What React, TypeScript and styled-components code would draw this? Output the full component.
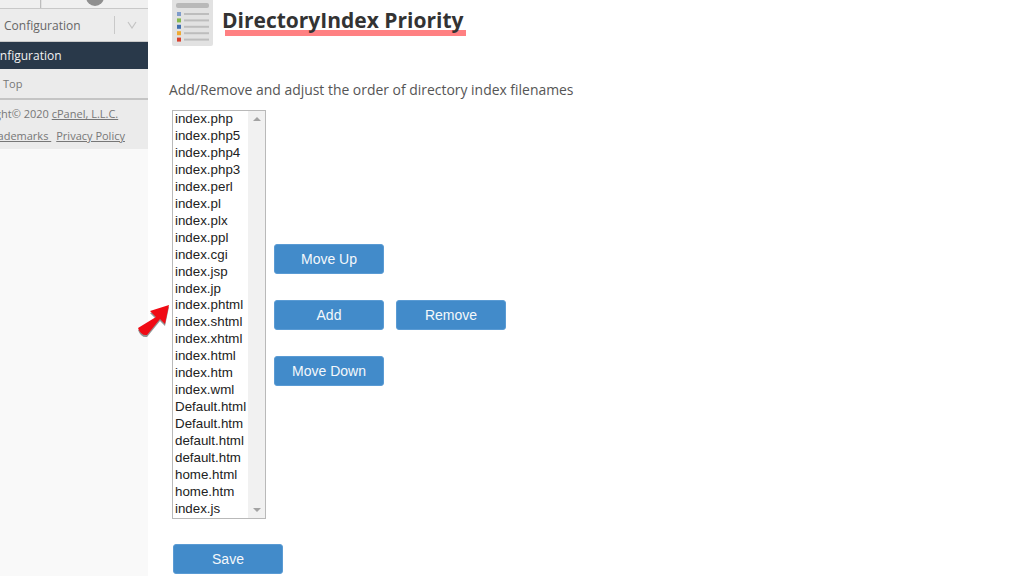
import * as React from 'react'
import styled, { createGlobalStyle } from 'styled-components'

const files = [
    'index.php', 'index.php5', 'index.php4', 'index.php3', 'index.perl', 'index.pl', 'index.plx', 'index.ppl',
    'index.cgi', 'index.jsp', 'index.jp', 'index.phtml', 'index.shtml', 'index.xhtml', 'index.html', 'index.htm',
    'index.wml', 'Default.html', 'Default.htm', 'default.html', 'default.htm', 'home.html', 'home.htm', 'index.js',
]

const DocIcon = () => (
    <svg width="41" height="50" viewBox="0 0 41 50">
        <rect width="41" height="50" rx="2" fill="#e2e2e2" />
        <rect x="4" y="7" width="33" height="5" rx="2" fill="#b9b9b9" />
        {['#7f9ccb', '#84b84c', '#3f6fb0', '#eeaa33', '#d8412f'].map((color, index) => (
            <g key={color}>
                <rect x="5" y={16 + index * 6.4} width="4" height="4" fill={color} />
                <rect x="12" y={17 + index * 6.4} width="25" height="2" fill="#bdbdbd" />
            </g>
        ))}
    </svg>
)

export default function App() {
    return (
        <Page>
            <GlobalStyle />
            <Sidebar>
                <TopTabs>
                    <TopTab />
                    <DottedTab><Knob /></DottedTab>
                </TopTabs>
                <SearchRow>
                    <SearchLabel>Configuration</SearchLabel>
                    <Chevron>
                        <svg width="10" height="8" viewBox="0 0 10 8">
                            <path d="M1 1l4 6 4-6" fill="none" stroke="#c4c4c4" strokeWidth="1.2" />
                        </svg>
                    </Chevron>
                </SearchRow>
                <ActiveRow>Configuration</ActiveRow>
                <TopRow>Top</TopRow>
                <SideFooter>
                    <CopyrightLine>Copyright© 2020 <FooterLink>cPanel, L.L.C.</FooterLink></CopyrightLine>
                    <LegalLine><FooterLink>Trademarks </FooterLink> <FooterLink>Privacy Policy</FooterLink></LegalLine>
                </SideFooter>
            </Sidebar>
            <Main>
                <Header>
                    <DocIcon />
                    <Title>DirectoryIndex Priority</Title>
                </Header>
                <Intro>Add/Remove and adjust the order of directory index filenames</Intro>
                <Editor>
                    <ListBox>
                        <FileList>
                            {files.map(file => <FileItem key={file}>{file}</FileItem>)}
                        </FileList>
                        <ScrollTrack>
                            <ScrollArrow $up />
                            <ScrollArrow />
                        </ScrollTrack>
                        <Pointer width="38" height="36" viewBox="0 0 38 36">
                            <path d="M2 27 L20 16 L14 10 L33 4 L29 23 L24 18 L11 34 Q5 35 2 27Z" fill="#3a3a3a" opacity="0.55" />
                            <path d="M2 25 L20 14 L14 8 L33 2 L29 21 L24 16 L11 32 Q5 33 2 25Z" fill="#f00a14" />
                        </Pointer>
                    </ListBox>
                    <Actions>
                        <ActionRow><Button>Move Up</Button></ActionRow>
                        <ActionRow><Button>Add</Button><Button>Remove</Button></ActionRow>
                        <ActionRow><Button>Move Down</Button></ActionRow>
                    </Actions>
                </Editor>
                <SaveButton>Save</SaveButton>
            </Main>
        </Page>
    )
}

const GlobalStyle = createGlobalStyle`
    html, body {
        margin: 0;
        height: 100%;
        overflow: hidden;
        background: #fff;
    }
`

const Page = styled.div`
    display: flex;
    width: 1024px;
    height: 576px;
    overflow: hidden;
    font-family: "Open Sans", sans-serif;
`

const Sidebar = styled.aside`
    width: 148px;
    flex: none;
    background: #f9f9f9;
    overflow: hidden;
`

const TopTabs = styled.div`
    display: flex;
    height: 8px;
    background: #efefef;
    border-bottom: 1px solid #c8c8c8;
`

const TopTab = styled.div`
    width: 40px;
    border-right: 1px solid #bdbdbd;
`

const DottedTab = styled.div`
    flex: 1;
    display: flex;
    justify-content: center;
    overflow: hidden;
    background: #f0f0f0;
    border-left: 1px solid #e2e2e2;
`

const Knob = styled.div`
    width: 18px;
    height: 18px;
    flex: none;
    margin-top: -12px;
    border-radius: 50%;
    background: #8f8f8f;
`

const SearchRow = styled.div`
    display: flex;
    align-items: center;
    height: 32px;
    padding-left: 4px;
    background: #ececec;
    color: #666;
    border-bottom: 1px solid #c9c9c9;
`

const SearchLabel = styled.span`
    flex: 1;
    font-size: 12px;
`

const Chevron = styled.span`
    display: flex;
    align-items: center;
    justify-content: center;
    width: 33px;
    height: 18px;
    border-left: 1px solid #c9c9c9;
`

const ActiveRow = styled.div`
    height: 27px;
    line-height: 27px;
    background: #29394a;
    color: #f2f2f2;
    font-size: 12px;
    text-indent: -15px;
    white-space: nowrap;
`

const TopRow = styled.div`
    display: flex;
    align-items: center;
    height: 29px;
    padding-left: 3px;
    background: #ebebeb;
    color: #777;
    font-size: 11px;
    border-bottom: 2px solid #c4c4c4;
`

const SideFooter = styled.div`
    height: 49px;
    padding-top: 3px;
    box-sizing: border-box;
    background: #ebebeb;
    color: #777;
    font-size: 11px;
    white-space: nowrap;
`

const CopyrightLine = styled.div`
    height: 22px;
    line-height: 22px;
    text-indent: -38px;
`

const LegalLine = styled.div`
    height: 22px;
    line-height: 22px;
    text-indent: -13px;
`

const FooterLink = styled.span`
    text-decoration: underline;
    margin-right: 5px;
`

const Main = styled.main`
    flex: 1;
    padding-left: 21px;
`

const Header = styled.header`
    display: flex;
    align-items: flex-start;
    gap: 9px;
    height: 46px;
    margin: -4px 0 0 3px;
`

const Title = styled.h1`
    position: relative;
    z-index: 0;
    margin: 8px 0 0;
    color: #333;
    font-size: 21px;
    line-height: 32px;
    font-weight: 700;
    white-space: nowrap;

    &::after {
        content: "";
        position: absolute;
        z-index: -1;
        left: 3px;
        bottom: 0;
        width: 241px;
        height: 6px;
        background: #ff8082;
    }
`

const Intro = styled.p`
    margin: 38px 0 0;
    color: #555;
    font-size: 13.93px;
    line-height: 20px;
`

const Editor = styled.div`
    display: flex;
    align-items: center;
    gap: 8px;
    margin: 10px 0 0 3px;
`

const ListBox = styled.div`
    position: relative;
    display: flex;
    width: 94px;
    height: 409px;
    box-sizing: border-box;
    border: 1px solid #b9b9b9;
    background: #fff;
`

const FileList = styled.ul`
    flex: 1;
    margin: 0;
    padding: 0 0 0 2px;
    list-style: none;
    overflow: hidden;
`

const FileItem = styled.li`
    height: 16.96px;
    color: #222;
    font: 13.33px/15px "Liberation Sans", Arial, sans-serif;
    white-space: nowrap;
`

const ScrollTrack = styled.div`
    display: flex;
    flex-direction: column;
    justify-content: space-between;
    align-items: center;
    width: 17px;
    flex: none;
    padding: 6px 0;
    box-sizing: border-box;
    background: #f1f1f1;
`

const ScrollArrow = styled.span<{ $up?: boolean }>`
    width: 0;
    height: 0;
    border-left: 4px solid transparent;
    border-right: 4px solid transparent;
    border-${props => props.$up ? 'bottom' : 'top'}: 4px solid #a3a3a3;
`

const Pointer = styled.svg`
    position: absolute;
    left: -37px;
    top: 192px;
`

const Actions = styled.div`
    display: flex;
    flex-direction: column;
    gap: 26px;
`

const ActionRow = styled.div`
    display: flex;
    gap: 12px;
`

const Button = styled.button`
    width: 110px;
    height: 30px;
    padding: 0;
    box-sizing: border-box;
    background: #428bca;
    border: 1px solid #5a9bd4;
    border-radius: 3px;
    color: #f4f8fb;
    font: 14px "Liberation Sans", Arial, sans-serif;
`

const SaveButton = styled(Button)`
    display: block;
    margin: 25px 0 0 4px;
`
